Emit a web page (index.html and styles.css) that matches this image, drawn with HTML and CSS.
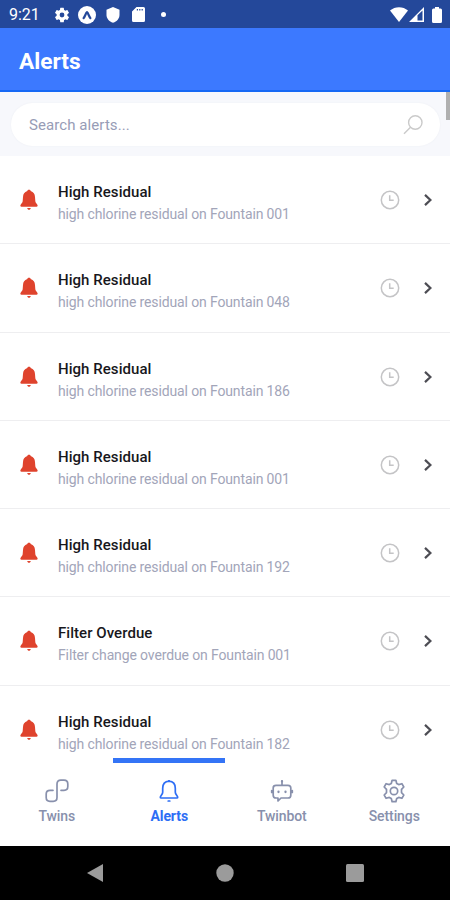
FILE: index.html
```
<!DOCTYPE html>
<html lang="en">
<head>
<meta charset="utf-8">
<title>Alerts</title>
<link rel="stylesheet" href="styles.css">
</head>
<body>
<svg class="defs" aria-hidden="true">
  <symbol id="bell" viewBox="0 0 20 22"><path d="M10 .8c1 0 1.500.5 1.700 1.300 2.900.9 4.100 3 4.300 5.800l.3 4.200c.1 1.500.9 2.300 1.900 3.400.8.9.5 2.300-.7 2.300H2.500c-1.200 0-1.500-1.400-.7-2.300 1-1.100 1.800-1.900 1.900-3.400L4 7.900c.2-2.800 1.400-4.900 4.300-5.800C8.500 1.300 9 .8 10 .8zM8.200 18.900h3.600c-.2 1.200-.9 1.800-1.800 1.800S8.400 20.100 8.200 18.900z"/></symbol>
  <symbol id="clock" viewBox="0 0 20 20"><circle cx="10" cy="10" r="8.700"/><path d="M9.700 5.300v5h4"/></symbol>
  <symbol id="chevron" viewBox="0 0 10 14"><path d="M2 1.900 7.400 7 2 12.100"/></symbol>
  <symbol id="cog" viewBox="0 0 24 24"><path fill-rule="evenodd" d="M19.140 12.940c.04-.3.060-.61.060-.94 0-.32-.02-.64-.07-.94l2.030-1.580a.49.49 0 0 0 .12-.61l-1.920-3.320a.49.49 0 0 0-.59-.22l-2.390.96a7 7 0 0 0-1.620-.94l-.36-2.540a.48.48 0 0 0-.48-.41h-3.840a.48.48 0 0 0-.47.41l-.36 2.540a7.400 7.400 0 0 0-1.620.94l-2.390-.96a.48.48 0 0 0-.59.22L2.740 8.870a.48.48 0 0 0 .12.61l2.030 1.580a6 6 0 0 0 0 1.880l-2.030 1.580a.49.49 0 0 0-.12.61l1.920 3.320c.12.22.37.29.59.22l2.390-.96c.5.38 1.030.7 1.620.94l.36 2.540c.05.24.24.41.48.41h3.840c.24 0 .44-.17.47-.41l.36-2.540a7.400 7.400 0 0 0 1.620-.94l2.390.96c.22.08.47 0 .59-.22l1.920-3.320a.48.48 0 0 0-.12-.61zM12 15.200A3.200 3.200 0 1 1 12 8.800a3.200 3.200 0 0 1 0 6.400z"/></symbol>
</svg>
<div class="screen">
  <div class="status">
    <span class="time">9:21</span>
    <svg class="s-cog" width="18" height="18"><use href="#cog"/></svg>
    <svg class="s-app" width="18" height="18" viewBox="0 0 18 18"><circle cx="9" cy="9" r="9" fill="#fff"/><path d="M5.600 12.200C7.200 10 7.800 7 9 6.200c1.200.8 1.800 3.800 3.400 6" fill="none" stroke="#24489a" stroke-width="2.200" stroke-linecap="round"/></svg>
    <svg class="s-shield" width="14" height="16" viewBox="0 0 14 16"><path d="M7 0l6.500 2.700v5c0 3.800-2.500 6.700-6.500 8-4-1.300-6.500-4.200-6.500-8v-5z" fill="#fff"/></svg>
    <svg class="s-sd" width="13" height="15" viewBox="0 0 13 15"><path fill-rule="evenodd" d="M4.500 0H11.500Q13 0 13 1.500V13.500Q13 15 11.500 15H1.500Q0 15 0 13.500V4.500zM4.800 2v1.500h1.200V2zM7.200 2v1.500h1.200V2zM9.600 2v1.500h1.200V2z" fill="#fff"/></svg>
    <i class="s-dot"></i>
    <svg class="s-wifi" width="18" height="15" viewBox="0 0 18 15"><path d="M0 3.500C5-1 13-1 18 3.500L9 15z" fill="#fff"/></svg>
    <svg class="s-cell" width="15" height="15" viewBox="0 0 15 15"><path fill-rule="evenodd" d="M15 0v15H0zM8.500 8.200V13.500H13.500V3.600z" fill="#fff"/></svg>
    <svg class="s-batt" width="10" height="16" viewBox="0 0 10 16"><path d="M3 0h4v1.500h1.500Q10 1.500 10 3v11.500Q10 16 8.500 16h-7Q0 16 0 14.500V3Q0 1.500 1.500 1.500H3z" fill="#fff"/></svg>
  </div>
  <header class="header"><h1>Alerts</h1></header>
  <div class="search">
    <div class="field">
      <span>Search alerts...</span>
      <svg width="20" height="20" viewBox="0 0 20 20"><circle cx="12.300" cy="7.500" r="6.700"/><path d="M7.500 12.300 1 18.800"/></svg>
    </div>
    <i class="scrollbar"></i>
  </div>
  <main class="list" id="list"></main>
  <nav class="tabs">
    <a class="tab"><svg width="24" height="24" viewBox="0 0 24 24"><path d="M8 11.300H5Q1.200 11.300 1.200 15V18.500Q1.200 22.300 5 22.300H8.200Q12 22.300 12 18.500V5Q12 1.200 15.800 1.200H19Q22.800 1.200 22.800 5V7.500Q22.800 11.300 19 11.300H16"/></svg><span>Twins</span></a>
    <a class="tab active"><svg width="24" height="24" viewBox="0 0 24 24"><path d="M12 2.200C8 2.600 5.700 5.200 5.700 9.200V13.200C5.700 15.500 3.300 16.700 3.300 18.300Q3.300 19 4.200 19H19.800Q20.700 19 20.700 18.300C20.700 16.700 18.300 15.500 18.300 13.200V9.200C18.300 5.200 16 2.600 12 2.200zM11.500 1.800h1M11.200 22h1.600"/></svg><span>Alerts</span></a>
    <a class="tab"><svg width="24" height="24" viewBox="0 0 24 24"><path d="M12 2v4M6 6.300H18Q20.800 6.300 20.800 9V16.200Q20.800 19 18 19H11L8 22V19H6Q3.200 19 3.200 16.200V9Q3.200 6.300 6 6.300zM1.700 11.500v2M22.300 11.500v2"/><path class="dots" d="M8.500 12.700v.4M15.500 12.700v.4M12 2.200v.2"/></svg><span>Twinbot</span></a>
    <a class="tab"><svg width="24" height="24" viewBox="0 0 24 24"><path d="M10.100 1.300h3.800l.8 3.200 2 1.100 3.200-.9 1.900 3.300-2.300 2.400v3.200l2.300 2.400-1.900 3.300-3.200-.9-2 1.100-.8 3.200h-3.800l-.8-3.200-2-1.100-3.200.9L2.200 16l2.300-2.400v-3.200L2.200 8l1.900-3.300 3.200.9 2-1.100z"/><circle cx="12" cy="12" r="3.700"/></svg><span>Settings</span></a>
  </nav>
  <div class="sysnav">
    <svg width="18" height="20" viewBox="0 0 18 20"><path d="M17 1v18L1 10z"/></svg>
    <svg width="18" height="20" viewBox="0 0 18 20"><circle cx="9" cy="10" r="8.700"/></svg>
    <svg width="18" height="20" viewBox="0 0 18 20"><rect y="1" width="18" height="18" rx="1.500"/></svg>
  </div>
</div>
<script src="app.js"></script>
</body>
</html>
```
FILE: styles.css
```
* { box-sizing: border-box; }
body { margin: 0; font-family: Roboto, "Liberation Sans", sans-serif; }
.defs { position: absolute; width: 0; height: 0; }
.screen { width: 450px; height: 900px; display: flex; flex-direction: column; background: #fff; overflow: hidden; }
.screen svg { display: block; flex: none; }
.status { height: 28px; flex: none; display: flex; align-items: center; background: #24489a; color: #fff; padding: 1px 8px 0 9px; fill: #fff; }
.time { width: 44px; font-size: 16px; }
.s-app { margin-left: 7px; }
.s-shield { margin-left: 10px; }
.s-sd { margin-left: 12px; }
.s-dot { width: 5px; height: 5px; border-radius: 50%; background: #fff; margin-left: 16px; }
.s-wifi { margin-left: auto; }
.s-cell { margin-left: 1px; }
.s-batt { margin-left: 8px; }
.header { height: 64px; flex: none; background: #3c79ff; border-bottom: 2px solid #1769f5; display: flex; align-items: center; padding: 5px 19px 0; }
h1 { margin: 0; font-size: 22.700px; line-height: 28px; font-weight: 700; color: #fff; }
.search { position: relative; height: 64px; flex: none; background: #f7f8fc; padding: 11px 10px 9px 11px; }
.field { height: 43px; border-radius: 22px; background: #fff; box-shadow: 0 0 2px #eceef3; display: flex; align-items: center; justify-content: space-between; padding: 0 17px 0 18px; color: #979cb6; font-size: 15px; letter-spacing: .08px; }
.field svg { fill: none; stroke: #cacaca; stroke-width: 1.400; }
.scrollbar { position: absolute; right: 0; top: 0; width: 4px; height: 28px; background: #b0b0b0; }
.list { height: 602px; flex: none; overflow: hidden; }
.row { height: 88.250px; display: flex; align-items: center; border-bottom: 1.500px solid #eeeef0; padding: 1px 17px 0 19px; }
.row .bell { width: 20px; height: 22px; fill: #df432d; }
.text { flex: 1; margin-left: 19px; padding-top: 7px; }
.title { font-size: 15px; line-height: 22px; letter-spacing: .05px; font-weight: 500; color: #17171c; }
.desc { font-size: 14px; letter-spacing: -.13px; line-height: 23px; color: #a2a5b9; }
.clock { width: 20px; height: 20px; fill: none; stroke: #c4c4c6; stroke-width: 1.500; }
.chevron { width: 10px; height: 14px; margin-left: 23px; fill: none; stroke: #4d4d54; stroke-width: 2.200; }
.tabs { height: 88px; flex: none; display: grid; grid-template-columns: repeat(4, 1fr); background: #fff; }
.tab { display: flex; flex-direction: column; align-items: center; border-top: 5px solid transparent; padding: 16px 0 0 1px; color: #8890ac; font-size: 14px; letter-spacing: -.1px; font-weight: 500; }
.tab svg { fill: none; stroke: currentColor; stroke-width: 1.700; stroke-linejoin: round; stroke-linecap: round; }
.tab .dots { stroke-width: 2.300; }
.tab span { margin-top: 3px; line-height: 20px; }
.tab.active { color: #2d6ef5; border-top-color: #3474f6; font-weight: 700; }
.sysnav { flex: 1; background: #000; display: flex; justify-content: center; align-items: center; gap: 112px; fill: #9b9b9b; }
```
FILE: app.js
```
const alerts = [
  ["High Residual", "high chlorine residual on Fountain 001"],
  ["High Residual", "high chlorine residual on Fountain 048"],
  ["High Residual", "high chlorine residual on Fountain 186"],
  ["High Residual", "high chlorine residual on Fountain 001"],
  ["High Residual", "high chlorine residual on Fountain 192"],
  ["Filter Overdue", "Filter change overdue on Fountain 001"],
  ["High Residual", "high chlorine residual on Fountain 182"]
];
document.getElementById("list").innerHTML = alerts.map(([title, desc]) => `
  <div class="row">
    <svg class="bell"><use href="#bell"/></svg>
    <div class="text"><div class="title">${title}</div><div class="desc">${desc}</div></div>
    <svg class="clock"><use href="#clock"/></svg>
    <svg class="chevron"><use href="#chevron"/></svg>
  </div>`).join("");
```
